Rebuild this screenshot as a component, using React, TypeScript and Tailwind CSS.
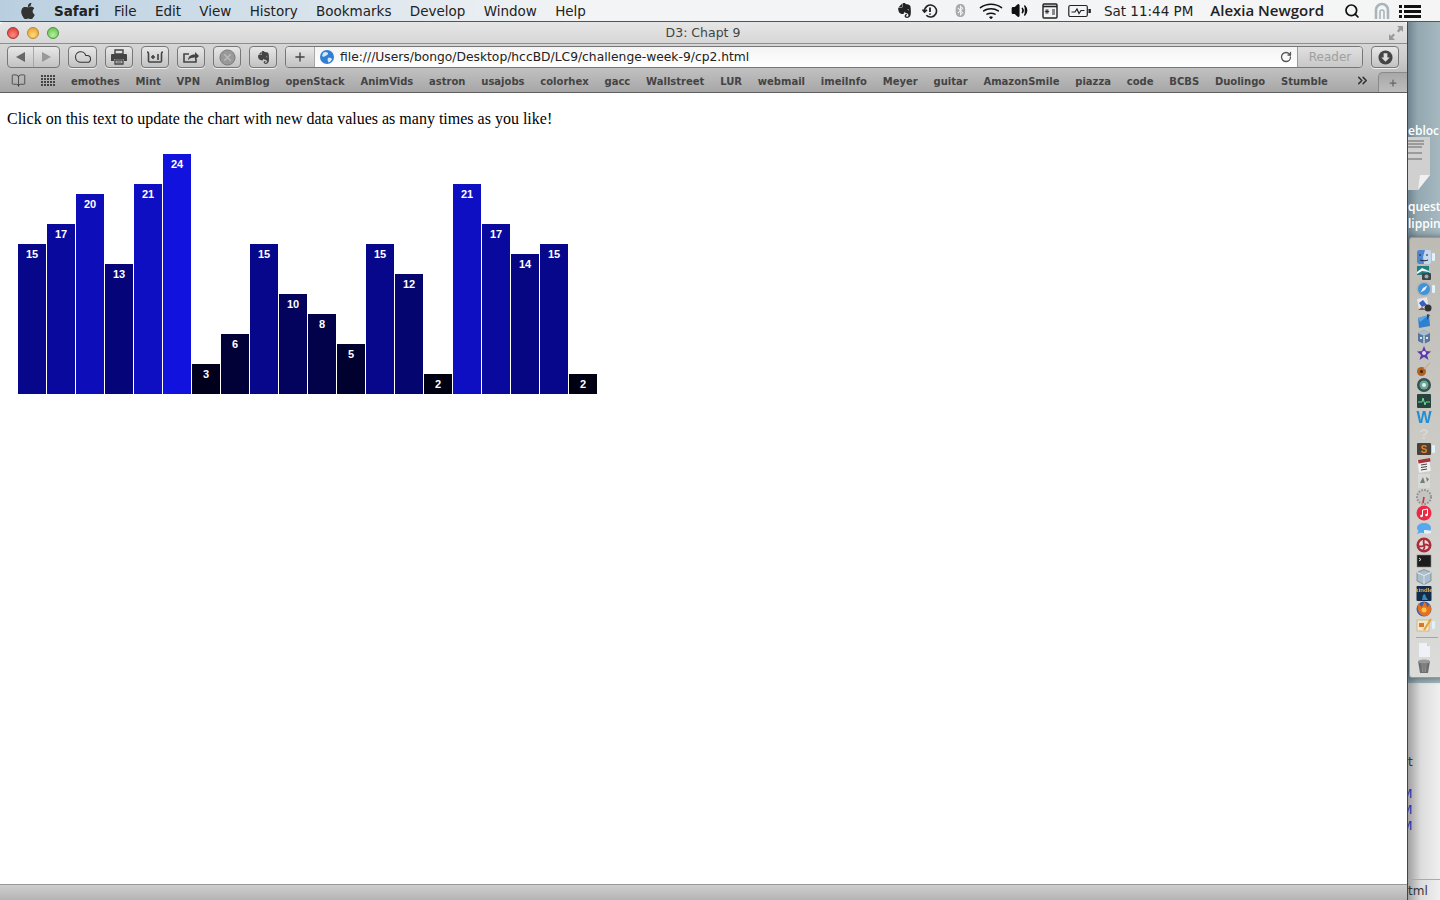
import type { ReactNode } from 'react';
import { BsApple, BsBluetooth, BsWifi } from 'react-icons/bs';
import { SiEvernote } from 'react-icons/si';
import { BookOpen, ChevronsRight, Cloud, Plus, RotateCw, Search, Volume2 } from 'lucide-react';

const menus = ['File', 'Edit', 'View', 'History', 'Bookmarks', 'Develop', 'Window', 'Help'];
const bookmarks = ['emothes', 'Mint', 'VPN', 'AnimBlog', 'openStack', 'AnimVids', 'astron', 'usajobs', 'colorhex', 'gacc', 'Wallstreet', 'LUR', 'webmail', 'imeiInfo', 'Meyer', 'guitar', 'AmazonSmile', 'piazza', 'code', 'BCBS', 'Duolingo', 'Stumble'];
const values = [15, 17, 20, 13, 21, 24, 3, 6, 15, 10, 8, 5, 15, 12, 2, 21, 17, 14, 15, 2];

function ToolButton({ children, className = 'w-[28px]' }: { children: ReactNode; className?: string }) {
  return (
    <div className={`flex h-[22px] items-center justify-center rounded-[4px] border border-[#777] bg-gradient-to-b from-[#e8e8e8] to-[#c2c2c2] text-[#444] shadow-[0_1px_0_#eee] ${className}`}>
      {children}
    </div>
  );
}

function MenuBar() {
  return (
    <div className="flex h-[22px] items-center border-b border-[#555] bg-gradient-to-r from-[#b9cfe0] via-[#f2f4f5] via-40% to-[#f5f5f5] font-['DejaVu_Sans',sans-serif] text-[13.5px] text-[#222]">
      <BsApple className="ml-[20px] h-[16px] w-[16px] shrink-0 text-[#333]" />
      <span className="ml-[18px] w-[42px] pt-px font-bold">Safari</span>
      <div className="ml-[18px] flex gap-[18.3px] pt-px">
        {menus.map((m) => (
          <span key={m}>{m}</span>
        ))}
      </div>
      <div className="ml-auto flex items-center">
        <SiEvernote className="h-[15px] w-[15px] text-[#222]" />
        <svg viewBox="0 0 16 16" className="ml-[10px] h-[16px] w-[16px] text-[#222]" fill="none" stroke="currentColor" strokeWidth="1.6">
          <path d="M2.5 8a6 6 0 1 1 1.8 4.3" />
          <path d="M0.5 6.5 2.5 9 5 6.8" />
          <path d="M8 4.5v4.5M8 10.5v1.2" strokeWidth="1.8" />
        </svg>
        <BsBluetooth className="ml-[16px] h-[13px] w-[13px] text-[#aaa]" />
        <BsWifi className="ml-[12px] h-[24px] w-[24px] text-[#111]" />
        <Volume2 className="ml-[8px] h-[17px] w-[17px] fill-[#111] text-[#111]" strokeWidth={2.2} />
        <svg viewBox="0 0 16 16" className="ml-[14px] h-[16px] w-[16px] text-[#222]" fill="none" stroke="currentColor">
          <rect x="1" y="1" width="14" height="14" rx="1" strokeWidth="1.4" />
          <path d="M1 3.5h14" strokeWidth="1.6" />
          <path d="M5 6v5M2.8 8.5h4.4M3.4 7l3.2 3M6.6 7l-3.2 3" strokeWidth="0.9" />
          <path d="M10 7h3M10 9h3M10 11h3" strokeWidth="1" />
        </svg>
        <svg viewBox="0 0 23 14" className="ml-[10px] h-[14px] w-[23px] text-[#222]" fill="none" stroke="currentColor" strokeWidth="1.2">
          <rect x="0.8" y="1.5" width="18.5" height="11" rx="1.5" />
          <path d="M20.5 5.5h1.7v3h-1.7" fill="currentColor" />
          <path d="M3.5 8H7l2-3 2 4.5L13 6.5h3.5" />
        </svg>
        <span className="ml-[13px] pt-px">Sat 11:44 PM</span>
        <span className="ml-[17px] font-['Open_Sans',sans-serif] text-[15px] font-semibold">Alexia Newgord</span>
        <Search className="ml-[20px] h-[16px] w-[16px] text-[#111]" strokeWidth={2.6} />
        <svg viewBox="0 0 16 18" className="ml-[14px] h-[18px] w-[16px]" fill="none" stroke="#aab4bb" strokeWidth="2.6">
          <path d="M2 17V8a6 6 0 0 1 12 0v9" />
          <path d="M6 17v-7a2 2 0 0 1 4 0v7" strokeWidth="1.6" />
        </svg>
        <svg viewBox="0 0 22 14" className="ml-[9px] mr-[19px] h-[14px] w-[22px]" fill="#111">
          <rect x="0" y="1" width="3" height="3" />
          <rect x="0" y="6" width="3" height="3" />
          <rect x="0" y="11" width="3" height="3" />
          <rect x="5" y="1" width="17" height="3" />
          <rect x="5" y="6" width="17" height="3" />
          <rect x="5" y="11" width="17" height="3" />
        </svg>
      </div>
    </div>
  );
}

function TitleBar() {
  return (
    <div className="relative flex h-[22px] items-center border-b border-[#8e8e8e]">
      <div className="ml-[7px] flex gap-[8px]">
        <div className="h-[12px] w-[12px] rounded-full border border-[#a33] bg-[radial-gradient(circle_at_50%_70%,#ff8a80,#d8302c)]" />
        <div className="h-[12px] w-[12px] rounded-full border border-[#b8862e] bg-[radial-gradient(circle_at_50%_70%,#ffd97a,#e59a2a)]" />
        <div className="h-[12px] w-[12px] rounded-full border border-[#4b9440] bg-[radial-gradient(circle_at_50%_70%,#b5f09a,#5cb84a)]" />
      </div>
      <span className="flex-1 pr-[60px] pt-[2px] text-center font-['DejaVu_Sans',sans-serif] text-[12.5px] text-[#444]">D3: Chapt 9</span>
      <svg viewBox="0 0 16 16" className="absolute right-[3px] top-[3px] h-[16px] w-[16px]" fill="#999">
        <path d="M9 1h6v6l-2-2-2.500 2.500-1.500-1.500L11 3zM1 15V9l2 2 2.500-2.500L7 10l-2.500 2.500L7 15z" />
      </svg>
    </div>
  );
}

function Toolbar() {
  return (
    <div className="flex h-[25px] items-start pl-[7px] pt-[2px]">
      <div className="flex h-[22px] w-[53px] items-center rounded-[4px] border border-[#777] bg-gradient-to-b from-[#e8e8e8] to-[#c2c2c2]">
        <div className="flex h-full w-[26px] items-center justify-center border-r border-[#a8a8a8]">
          <div className="h-0 w-0 border-y-[5px] border-r-[9px] border-y-transparent border-r-[#666]" />
        </div>
        <div className="flex h-full flex-1 items-center justify-center">
          <div className="h-0 w-0 border-y-[5px] border-l-[9px] border-y-transparent border-l-[#999]" />
        </div>
      </div>
      <div className="ml-[8px] flex gap-[8px]">
        <ToolButton className="w-[29px]">
          <Cloud className="h-[18px] w-[20px] text-[#333]" strokeWidth={1.4} />
        </ToolButton>
        <ToolButton>
          <svg viewBox="0 0 18 16" className="h-[16px] w-[18px]" fill="#444">
            <path d="M5 1h8v4H5z" fill="none" stroke="#444" strokeWidth="1.4" />
            <path d="M2 5h14a1 1 0 0 1 1 1v6h-3v-2H4v2H1V6a1 1 0 0 1 1-1z" />
            <path d="M5 11h8v4H5z" fill="none" stroke="#444" strokeWidth="1.3" />
            <path d="M6.500 13h5" stroke="#444" />
          </svg>
        </ToolButton>
        <ToolButton>
          <svg viewBox="0 0 20 16" className="h-[16px] w-[20px]" fill="none" stroke="#444" strokeWidth="1.6">
            <path d="M2 3c1 0 1.500.6 1.500 1.500V12a1 1 0 0 0 1 1h11a1 1 0 0 0 1-1V4.500C16.500 3.600 17 3 18 3" />
            <path d="M8 6v4M6 8h4M13 5v6" />
          </svg>
        </ToolButton>
        <ToolButton>
          <svg viewBox="0 0 18 16" className="h-[16px] w-[18px]" fill="none" stroke="#444" strokeWidth="1.6">
            <path d="M14 10v3H2V5h5" />
            <path d="M6 11c.5-4 3-5.500 7-5.500V3l4 4-4 4V8.500c-3 0-5 .7-7 2.500z" fill="#444" stroke="none" />
          </svg>
        </ToolButton>
        <ToolButton>
          <svg viewBox="0 0 18 18" className="h-[17px] w-[17px]">
            <circle cx="9" cy="9" r="8" fill="#999" stroke="#777" />
            <path d="M5.500 5.500l7 7M12.500 5.500l-7 7" stroke="#bbb" strokeWidth="1.600" />
          </svg>
        </ToolButton>
        <ToolButton>
          <SiEvernote className="h-[13px] w-[13px] text-[#444]" />
        </ToolButton>
      </div>
      <div className="ml-[8px] flex h-[22px] flex-1 overflow-hidden rounded-[4px] border border-[#777]">
        <div className="flex w-[29px] items-center justify-center border-r border-[#a8a8a8] bg-gradient-to-b from-[#e8e8e8] to-[#c2c2c2]">
          <Plus className="h-[14px] w-[14px] text-[#444]" strokeWidth={2.4} />
        </div>
        <div className="flex flex-1 items-center bg-gradient-to-b from-[#f4f4f4] to-white pl-[5px] font-['DejaVu_Sans',sans-serif] text-[12.3px] text-[#222]">
          <svg viewBox="0 0 14 14" className="h-[14px] w-[14px]">
            <circle cx="7" cy="7" r="7" fill="#2f7fd6" />
            <path d="M3 3c2-1.500 4-1 5 0 .5 1.500-1 2-2.500 3S3 7 2 6zM8 8c1.500-.5 3.500 0 4 1-.5 2-2 3-3.500 3.500C8 11 7 10 8 8z" fill="#d6e8f8" />
          </svg>
          <span className="ml-[6px] pt-[1px]">file:///Users/bongo/Desktop/hccBD/LC9/challenge-week-9/cp2.html</span>
          <RotateCw className="ml-auto mr-[5px] h-[12px] w-[12px] text-[#555]" strokeWidth={2.6} />
        </div>
        <div className="flex w-[65px] items-center justify-center border-l border-[#999] bg-gradient-to-b from-[#e0e0e0] to-[#c8c8c8] font-['DejaVu_Sans',sans-serif] text-[12px] text-[#a0a0a0]">
          Reader
        </div>
      </div>
      <ToolButton className="mx-[8px] w-[28px]">
        <svg viewBox="0 0 16 16" className="h-[15px] w-[15px]">
          <circle cx="8" cy="8" r="7.500" fill="#444" />
          <path d="M6 3.500h4V8h2.500L8 12.500 3.500 8H6z" fill="#ddd" />
        </svg>
      </ToolButton>
    </div>
  );
}

function BookmarksBar() {
  return (
    <div className="flex h-[24px] items-center border-b border-[#5e5e5e] pl-[10px] font-['DejaVu_Sans',sans-serif] text-[10px] font-bold text-[#444]">
      <BookOpen className="h-[15px] w-[17px] shrink-0 text-[#333]" strokeWidth={1.2} />
      <div className="ml-[14px] grid shrink-0 grid-cols-[repeat(5,2px)] grid-rows-[repeat(4,2px)] gap-px">
        {Array.from({ length: 20 }).map((_, i) => (
          <div key={i} className="bg-[#444]" />
        ))}
      </div>
      <div className="ml-[16px] flex gap-[15.8px] pt-px">
        {bookmarks.map((b) => (
          <span key={b}>{b}</span>
        ))}
      </div>
      <ChevronsRight className="ml-auto h-[15px] w-[15px] shrink-0 text-[#333]" strokeWidth={2.4} />
      <div className="ml-[8px] flex h-[20px] w-[29px] shrink-0 items-center justify-center self-end rounded-tl-[5px] border-l border-t border-[#8a8a8a] bg-gradient-to-b from-[#a8a8a8] to-[#bdbdbd]">
        <Plus className="h-[10px] w-[10px] text-[#666]" strokeWidth={3} />
      </div>
    </div>
  );
}

function BarChart() {
  return (
    <div className="ml-[18px] mt-[26px] flex h-[240px] items-end gap-px">
      {values.map((v, i) => (
        <div
          key={i}
          className="w-[28px] pt-[4px] text-center font-['Liberation_Sans',sans-serif] text-[11px] font-bold leading-[12px] text-white"
          style={{ height: v * 10, backgroundColor: `rgb(${(v * v) / 32}, ${(v * v) / 32}, ${v * 9.3})` }}
        >
          {v}
        </div>
      ))}
    </div>
  );
}

const dockIcons: ReactNode[] = [
  // finder
  <g key="finder"><rect x="1" y="1" width="14" height="14" rx="2" fill="#c6d8ee" /><path d="M1 3a2 2 0 0 1 2-2h6L7 8l1 7H3a2 2 0 0 1-2-2z" fill="#4f86cf" /><path d="M4 5v2M11 5v2M4 11c2 1 6 1 8 0" stroke="#223" fill="none" /></g>,
  // photos
  <g key="photos"><rect x="1" y="1" width="12" height="9" fill="#1f7f82" /><path d="M1 7l5-4 7 3v1l-7-1-5 3z" fill="#f4f4f0" /><rect x="6" y="8" width="9" height="7" rx="1" fill="#444" /><circle cx="10.500" cy="11.500" r="2" fill="#9ab" /></g>,
  // safari
  <g key="safari"><circle cx="8" cy="8" r="7.500" fill="#aeb4b8" /><circle cx="8" cy="8" r="6" fill="#3f93d8" /><path d="M11.500 4.500 9 9 4.500 11.500 7 7z" fill="#eef" /></g>,
  // mail stamp
  <g key="mail"><rect x="2" y="1" width="10" height="11" fill="#e6e6ee" transform="rotate(-10 7 7)" /><path d="M3 6l4-3 4 5-5 2z" fill="#3a62b8" /><circle cx="12" cy="11" r="3.500" fill="#333" /><path d="M2 13l4-3 4 3z" fill="#7f5f48" /></g>,
  // xcode-like tile
  <g key="xcode"><path d="M2 5l11-3 1 11-11 2z" fill="#2f80cf" /><path d="M2 5l11-3-9 7z" fill="#5aa5e6" /><path d="M11 1l3 1-3 5z" fill="#444" /></g>,
  // virtualbox
  <g key="vbox"><path d="M8 1l6 3v8l-6 3-6-3V4z" fill="#56769c" /><path d="M8 1l6 3-6 3-6-3z" fill="#a8bdd4" /><path d="M8 7v8" stroke="#e4ecf4" strokeWidth="1.200" /><rect x="4" y="8" width="2" height="2" fill="#dfe8f2" /><rect x="10" y="8" width="2" height="2" fill="#dfe8f2" /></g>,
  // imovie star
  <g key="star"><path d="M8 1l2 5 5 .5-4 3.500 1.500 5L8 12l-4.500 3L5 10 1 6.500 6 6z" fill="#5c3ba8" /><circle cx="8" cy="8" r="2" fill="#e5dcf4" /></g>,
  // garageband
  <g key="guitar"><circle cx="5.500" cy="10.500" r="4.500" fill="#b3611f" /><circle cx="5.500" cy="10.500" r="1.500" fill="#3a2210" /><path d="M8 8l6-6" stroke="#c8b098" strokeWidth="1.600" /></g>,
  // time machine
  <g key="time"><circle cx="8" cy="8" r="7" fill="#34524e" /><circle cx="8" cy="8" r="4.500" fill="#6da59b" /><circle cx="8" cy="8" r="2" fill="#dff0ec" /></g>,
  // activity monitor
  <g key="activity"><rect x="1" y="1" width="14" height="14" rx="1" fill="#27443e" /><path d="M2 9h4l1-4 2 7 1-3h4" stroke="#6fe09a" fill="none" /></g>,
  // word
  <text key="word" x="8" y="14" textAnchor="middle" fontFamily="Liberation Sans, sans-serif" fontSize="16" fontWeight="700" fill="#1f8fd6">W</text>,
  // missing app
  <text key="missing" x="8" y="14" textAnchor="middle" fontFamily="Liberation Sans, sans-serif" fontSize="15" fontWeight="700" fill="#d8d8d4">?</text>,
  // sublime
  <g key="sublime"><rect x="1" y="2" width="14" height="12" rx="1" fill="#4a4238" /><text x="8" y="12" textAnchor="middle" fontFamily="Liberation Sans, sans-serif" fontSize="10" fontWeight="700" fill="#e8852c">S</text></g>,
  // calendar
  <g key="calendar"><rect x="2" y="2" width="12" height="13" fill="#eee" transform="rotate(-8 8 8)" /><path d="M2 3l12-2 .5 3.500-12 2z" fill="#a8323a" /><path d="M5 8l6-1M5 10.500l6-1M5 13l6-1" stroke="#444" /></g>,
  // preview sheet
  <g key="sheet"><rect x="2" y="1" width="12" height="14" fill="#d8d8d4" /><path d="M4 10l3-6 2 6zM10 4l3 2-2 3z" fill="#6f7f78" /></g>,
  // dial
  <g key="dial"><circle cx="8" cy="8" r="7" fill="#c4c4c2" /><circle cx="8" cy="8" r="7" fill="none" stroke="#8c8c8c" strokeDasharray="1.500 1.500" strokeWidth="2" /><path d="M8 8l-1 6" stroke="#d03030" strokeWidth="1.600" /></g>,
  // itunes
  <g key="itunes"><circle cx="8" cy="8" r="7.500" fill="#ea2a44" /><path d="M6.500 11V5l5-1v6" stroke="#fff" fill="none" /><circle cx="5.500" cy="11" r="1.300" fill="#fff" /><circle cx="10.500" cy="10" r="1.300" fill="#fff" /></g>,
  // messages
  <g key="messages"><path d="M8 2c4 0 7 2 7 5s-3 5-7 5c-1 0-2 0-3-.5L1 13l1.500-3C1.500 9 1 8 1 7c0-3 3-5 7-5z" fill="#55a9ec" /><path d="M8 9c3 0 6 .5 7 1v2c-2 1-5 1-7 0z" fill="#e4f0fa" /></g>,
  // swirl
  <g key="swirl"><circle cx="8" cy="8" r="7.500" fill="#a92c3a" /><circle cx="8" cy="8" r="5" fill="#eadadc" /><path d="M8 3c-1 2 0 4 0 5s-3 2-5 1M8 8c2-1 4 0 5 1M8 8c1 2 0 4-1 5" stroke="#a92c3a" strokeWidth="1.800" fill="none" /></g>,
  // terminal
  <g key="terminal"><rect x="1" y="2" width="14" height="12" fill="#1c1c1c" stroke="#888" strokeWidth="0.600" /><path d="M3 5l2 1.500L3 8" stroke="#ddd" fill="none" /></g>,
  // cube
  <g key="cube"><path d="M8 0.500l7 3V12l-7 3.500L1 12V3.500z" fill="#a9bdca" stroke="#5f7180" strokeWidth="0.600" /><path d="M1 3.500l7 3 7-3" stroke="#e8f0f4" fill="none" /><path d="M8 6.500v9" stroke="#dce6ec" /></g>,
  // kindle
  <g key="kindle"><rect x="0.500" y="1" width="15" height="15" rx="1" fill="#122c4a" /><text x="8" y="7" textAnchor="middle" fontFamily="Liberation Sans, sans-serif" fontSize="6" fontWeight="700" fill="#e8b860">kindle</text><path d="M6 15l1-5 2-1 1 3 2 3z" fill="#3d86b5" /></g>,
  // firefox
  <g key="firefox"><circle cx="8" cy="8" r="7.500" fill="#3f5ea8" /><path d="M3 2c-3 5 0 13 6 13 4 0 6-3 6-7 0-2-1-4-2-5 0 2-1 3-2 3 0-2-1-4-3-5 0 2-2 3-2 5-1 0-2-2-3-4z" fill="#e8701c" /><circle cx="8" cy="9" r="2.500" fill="#f6c34a" /></g>,
  // pages-style pencil
  <g key="pencil"><rect x="1" y="3" width="12" height="11" fill="#f3e8cc" stroke="#c8a060" strokeWidth="0.600" /><rect x="3" y="6" width="5" height="4" fill="#d8762c" /><path d="M8 13L15 2" stroke="#e8a030" strokeWidth="2" /></g>,
];

function Dock() {
  const running = [0, 2, 12, 23];
  return (
    <div className="absolute left-px top-[215px] flex h-[441px] w-[40px] flex-col items-start rounded-l-[3px] border border-[#999] bg-gradient-to-b from-[#bdbbb4] to-[#dcdcda] pl-[6px] pt-[11px] shadow-[-3px_0_7px_rgba(0,0,0,0.45)]">
      {dockIcons.map((icon, i) => (
        <div key={i} className="flex h-[16px] items-center">
          <svg viewBox="0 0 16 16" className="h-[16px] w-[16px] blur-[0.3px]">{icon}</svg>
          {running.includes(i) && <div className="h-[8px] w-[3px] rounded-[1px] bg-[#e2f2fb]" />}
        </div>
      ))}
      <div className="my-[4px] h-px w-[22px] bg-[#a5a5a5]" />
      <svg viewBox="0 0 16 16" className="h-[16px] w-[16px] blur-[0.3px]">
        <path d="M3 1h8l3 3v11H3z" fill="#eef2f6" />
        <path d="M11 1v3h3z" fill="#c4d4e4" />
      </svg>
      <svg viewBox="0 0 16 16" className="h-[16px] w-[16px] blur-[0.3px]">
        <path d="M2 3h12l-2 12H4z" fill="#6d6d6d" />
        <ellipse cx="8" cy="3.500" rx="6" ry="2" fill="#999" />
        <path d="M6 6l.5 8M8 6v8M10 6l-.5 8" stroke="#aaa" strokeWidth="0.600" />
      </svg>
    </div>
  );
}

function DesktopStrip() {
  const label = "absolute left-0 whitespace-nowrap font-['Open_Sans',sans-serif] text-[12px] font-semibold text-white";
  return (
    <div className="relative w-[32px] overflow-hidden bg-[#e6e6e6]">
      <div className="h-[661px] bg-gradient-to-r from-[#6f848e] via-[#93a8b1] via-30% to-[#a6b8c0]" />
      <div className="h-[217px] bg-gradient-to-r from-[#a0a0a0] via-[#dcdcdc] via-40% to-[#f0f0f0]" />
      {/* desktop files sticking out behind the window */}
      <span className={`${label} top-[100px]`}>ebloc</span>
      <svg viewBox="0 0 24 53" className="absolute left-0 top-[115px] h-[53px] w-[24px]">
        <path d="M0 0h22v38L10 53H0z" fill="#d0d0d0" />
        <path d="M22 38H12l-2 15z" fill="#f0f0f0" />
        <path d="M0 4h16M0 7h16M0 10h14M0 16h14M0 22h14" stroke="#666" />
      </svg>
      <span className={`${label} top-[176px]`}>quest</span>
      <span className={`${label} top-[193px]`}>lippin</span>
      <Dock />
      <span className="absolute left-0 top-[731px] font-['DejaVu_Sans',sans-serif] text-[12px] text-[#333]">t</span>
      <span className="absolute -left-[6px] top-[763px] font-['DejaVu_Sans',sans-serif] text-[12px] text-[#2233aa]">M</span>
      <span className="absolute -left-[6px] top-[779px] font-['DejaVu_Sans',sans-serif] text-[12px] text-[#2233aa]">M</span>
      <span className="absolute -left-[6px] top-[795px] font-['DejaVu_Sans',sans-serif] text-[12px] text-[#2233aa]">M</span>
      <div className="absolute inset-x-0 top-[857px] border-t border-[#aaa]" />
      <span className="absolute left-0 top-[860px] font-['DejaVu_Sans',sans-serif] text-[12px] text-[#333]">tml</span>
    </div>
  );
}

export default function App() {
  return (
    <div className="flex h-[900px] w-[1440px] flex-col overflow-hidden bg-white">
      <MenuBar />
      <div className="flex min-h-0 flex-1">
        <div className="flex w-[1408px] flex-col border-r border-[#444]">
          <div className="rounded-t-[4px] bg-gradient-to-b from-[#e6e6e6] via-[#cdcdcd] to-[#a6a6a6]">
            <TitleBar />
            <Toolbar />
            <BookmarksBar />
          </div>
          <div className="flex-1 bg-white">
            <p className="ml-[7px] mt-[17px] font-['Liberation_Serif',serif] text-[16px] leading-[18px] text-black">
              Click on this text to update the chart with new data values as many times as you like!
            </p>
            <BarChart />
          </div>
          <div className="h-[16px] border-t border-[#999] bg-gradient-to-b from-[#cfcfcf] to-[#b4b4b4]" />
        </div>
        <DesktopStrip />
      </div>
    </div>
  );
}
